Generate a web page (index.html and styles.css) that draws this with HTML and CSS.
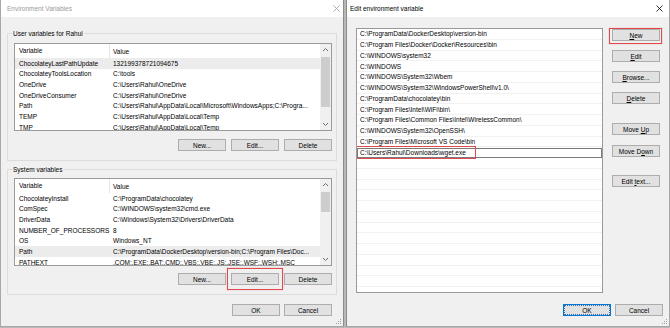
FILE: index.html
```html
<!DOCTYPE html>
<html>
<head>
<meta charset="utf-8">
<link rel="stylesheet" href="styles.css">
</head>
<body>
<div class="dlg dlg-left">
  <div class="titlebar inactive">
    <span>Environment Variables</span>
    <svg class="close" width="7" height="7" viewBox="0 0 7 7"><path d="M0.5 0.5L6.5 6.5M6.5 0.5L0.5 6.5" stroke="currentColor" stroke-width="0.8"/></svg>
  </div>
  <div class="left-body">
    <div class="group g1">
      <span class="glabel">User variables for Rahul</span>
      <div class="lv">
        <div class="lv-main">
          <div class="lv-head"><span class="c1 hd">Variable</span><span class="c2">Value</span></div>
          <div class="lv-row sel"><span class="c1">ChocolateyLastPathUpdate</span><span class="c2">132199378721094675</span></div>
          <div class="lv-row"><span class="c1">ChocolateyToolsLocation</span><span class="c2">C:\tools</span></div>
          <div class="lv-row"><span class="c1">OneDrive</span><span class="c2">C:\Users\Rahul\OneDrive</span></div>
          <div class="lv-row"><span class="c1">OneDriveConsumer</span><span class="c2">C:\Users\Rahul\OneDrive</span></div>
          <div class="lv-row"><span class="c1">Path</span><span class="c2">C:\Users\Rahul\AppData\Local\Microsoft\WindowsApps;C:\Progra...</span></div>
          <div class="lv-row"><span class="c1">TEMP</span><span class="c2">C:\Users\Rahul\AppData\Local\Temp</span></div>
          <div class="lv-row"><span class="c1">TMP</span><span class="c2">C:\Users\Rahul\AppData\Local\Temp</span></div>
        </div>
        <div class="sb">
          <svg class="arr" width="11" height="12" viewBox="0 0 11 12"><path d="M3 7L5.5 4.5L8 7" fill="none" stroke="#606060" stroke-width="0.9"/></svg>
          <div class="sb-track"><div class="thumb t1"></div></div>
          <svg class="arr" width="11" height="12" viewBox="0 0 11 12"><path d="M3 5L5.5 7.5L8 5" fill="none" stroke="#606060" stroke-width="0.9"/></svg>
        </div>
      </div>
      <div class="btnrow">
        <div class="btn"><span>New...</span></div>
        <div class="btn"><span>Edit...</span></div>
        <div class="btn"><span>Delete</span></div>
      </div>
    </div>
    <div class="group g2">
      <span class="glabel">System variables</span>
      <div class="lv">
        <div class="lv-main">
          <div class="lv-head"><span class="c1 hd">Variable</span><span class="c2">Value</span></div>
          <div class="lv-row"><span class="c1">ChocolateyInstall</span><span class="c2">C:\ProgramData\chocolatey</span></div>
          <div class="lv-row"><span class="c1">ComSpec</span><span class="c2">C:\WINDOWS\system32\cmd.exe</span></div>
          <div class="lv-row"><span class="c1">DriverData</span><span class="c2">C:\Windows\System32\Drivers\DriverData</span></div>
          <div class="lv-row"><span class="c1">NUMBER_OF_PROCESSORS</span><span class="c2">8</span></div>
          <div class="lv-row"><span class="c1">OS</span><span class="c2">Windows_NT</span></div>
          <div class="lv-row sel"><span class="c1">Path</span><span class="c2">C:\ProgramData\DockerDesktop\version-bin;C:\Program Files\Doc...</span></div>
          <div class="lv-row"><span class="c1">PATHEXT</span><span class="c2">.COM;.EXE;.BAT;.CMD;.VBS;.VBE;.JS;.JSE;.WSF;.WSH;.MSC</span></div>
        </div>
        <div class="sb">
          <svg class="arr" width="11" height="12" viewBox="0 0 11 12"><path d="M3 7L5.5 4.5L8 7" fill="none" stroke="#606060" stroke-width="0.9"/></svg>
          <div class="sb-track"><div class="thumb t2"></div></div>
          <svg class="arr" width="11" height="12" viewBox="0 0 11 12"><path d="M3 5L5.5 7.5L8 5" fill="none" stroke="#606060" stroke-width="0.9"/></svg>
        </div>
      </div>
      <div class="btnrow">
        <div class="btn"><span>New...</span></div>
        <div class="btn hl"><span>Edit...</span></div>
        <div class="btn"><span>Delete</span></div>
      </div>
    </div>
    <div class="footer footer-left">
      <div class="btn"><span>OK</span></div>
      <div class="btn"><span>Cancel</span></div>
    </div>
  </div>
  <svg class="grip" width="5" height="5" viewBox="0 0 5 5"><g fill="#a0a0a0"><rect x="4" y="0" width="1" height="1"/><rect x="2" y="2" width="1" height="1"/><rect x="4" y="2" width="1" height="1"/><rect x="0" y="4" width="1" height="1"/><rect x="2" y="4" width="1" height="1"/><rect x="4" y="4" width="1" height="1"/></g></svg>
</div>
<div class="gap"></div>
<div class="dlg dlg-right">
  <div class="titlebar">
    <span>Edit environment variable</span>
    <svg class="close" width="7" height="7" viewBox="0 0 7 7"><path d="M0.5 0.5L6.5 6.5M6.5 0.5L0.5 6.5" stroke="currentColor" stroke-width="0.8"/></svg>
  </div>
  <div class="right-body">
    <div class="pathlist">
      <div class="prow">C:\ProgramData\DockerDesktop\version-bin</div>
      <div class="prow">C:\Program Files\Docker\Docker\Resources\bin</div>
      <div class="prow">C:\WINDOWS\system32</div>
      <div class="prow">C:\WINDOWS</div>
      <div class="prow">C:\WINDOWS\System32\Wbem</div>
      <div class="prow">C:\WINDOWS\System32\WindowsPowerShell\v1.0\</div>
      <div class="prow">C:\ProgramData\chocolatey\bin</div>
      <div class="prow">C:\Program Files\Intel\WiFi\bin\</div>
      <div class="prow">C:\Program Files\Common Files\Intel\WirelessCommon\</div>
      <div class="prow">C:\WINDOWS\System32\OpenSSH\</div>
      <div class="prow">C:\Program Files\Microsoft VS Code\bin</div>
      <div class="prow editing"><span class="editbox">C:\Users\Rahul\Downloads\wget.exe</span><span class="redbox"></span></div>
      <div class="prow"></div><div class="prow"></div><div class="prow"></div><div class="prow"></div>
      <div class="prow"></div><div class="prow"></div><div class="prow"></div><div class="prow"></div>
      <div class="prow"></div><div class="prow"></div><div class="prow"></div><div class="prow"></div>
    </div>
    <div class="btncol">
      <div class="btn hl hl-new"><span><u>N</u>ew</span></div>
      <div class="btn b-edit"><span><u>E</u>dit</span></div>
      <div class="btn b-browse"><span><u>B</u>rowse...</span></div>
      <div class="btn b-delete"><span><u>D</u>elete</span></div>
      <div class="btn b-up"><span>Move <u>U</u>p</span></div>
      <div class="btn b-down"><span>Move D<u>o</u>wn</span></div>
      <div class="btn b-text"><span>Edit <u>t</u>ext...</span></div>
    </div>
  </div>
  <div class="footer footer-right">
    <div class="btn focus"><span>OK</span></div>
    <div class="btn"><span>Cancel</span></div>
  </div>
  <svg class="grip" width="5" height="5" viewBox="0 0 5 5"><g fill="#a0a0a0"><rect x="4" y="0" width="1" height="1"/><rect x="2" y="2" width="1" height="1"/><rect x="4" y="2" width="1" height="1"/><rect x="0" y="4" width="1" height="1"/><rect x="2" y="4" width="1" height="1"/><rect x="4" y="4" width="1" height="1"/></g></svg>
</div>
</body>
</html>
```
FILE: styles.css
```css
* { box-sizing: border-box; }
html, body { margin: 0; padding: 0; }
body {
  width: 670px;
  height: 328px;
  overflow: hidden;
  display: flex;
  background: #b8b8b8;
  font-family: "Liberation Sans", Arial, sans-serif;
  font-size: 6.5px;
  color: #000;
}
.dlg {
  position: relative;
  flex: none;
  height: 327px;
  background: #f0f0f0;
  border: 1px solid #a8a8a8;
  border-top: none;
  display: flex;
  flex-direction: column;
}
.dlg-left { width: 344px; border-right-color: #8c8c8c; }
.gap { width: 2px; flex: none; }
.dlg-right { width: 324px; border-left-color: #8c8c8c; }

.titlebar {
  height: 17px;
  flex: none;
  background: #fff;
  display: flex;
  align-items: center;
  justify-content: space-between;
  padding: 0 6px 0 6px;
  color: #000;
}
.titlebar.inactive { color: #9a9a9a; }
.dlg-left .titlebar { padding-right: 3px; }
.dlg-right .titlebar { padding-left: 3px; padding-right: 6px; }
.close { display: block; }

.left-body { padding: 0 6px; display: flex; flex-direction: column; }
.group {
  position: relative;
  border: 1px solid #dcdcdc;
  padding: 9px 4px 9px 6px;
}
.g1 { margin-top: 16px; }
.g2 { margin-top: 8px; padding-top: 8px; }
.glabel {
  position: absolute;
  top: -4px;
  left: 4px;
  padding: 0 1px;
  background: #f0f0f0;
  line-height: 7px;
}

.lv {
  height: 88px;
  border: 1px solid #9a9a9a;
  background: #fff;
  display: flex;
  overflow: hidden;
}
.lv-main { flex: 1; min-width: 0; }
.lv-head { height: 14px; display: flex; align-items: center; }
.lv-head .hd { height: 14px; line-height: 14px; border-right: 1px solid #e5e5e5; }
.lv-row {
  height: 10.65px;
  display: flex;
  align-items: center;
  white-space: nowrap;
}
.lv-row.sel { background: #ececec; }
.c1 { width: 95px; flex: none; padding-left: 4px; white-space: nowrap; }
.c2 { padding-left: 3px; white-space: nowrap; }

.sb {
  width: 11px;
  flex: none;
  background: #f0f0f0;
  display: flex;
  flex-direction: column;
}
.arr { display: block; flex: none; }
.sb-track { flex: 1; padding: 1px 1px 0 1px; }
.thumb { background: #cdcdcd; }
.t1 { height: 50px; }
.t2 { height: 20px; }

.btnrow {
  display: flex;
  justify-content: flex-end;
  gap: 5px;
  margin-top: 8px;
}
.g2 .btnrow { margin-top: 7px; }
.btn {
  position: relative;
  width: 48px;
  height: 12px;
  flex: none;
  border: 1px solid #adadad;
  background: #e1e1e1;
  display: flex;
  align-items: center;
  justify-content: center;
  white-space: nowrap;
}
.btn.hl::after {
  content: "";
  position: absolute;
  left: -5px;
  right: -5px;
  top: -6px;
  bottom: -6px;
  border: 1.5px solid #e04a4e;
  box-shadow: 0 0 1px rgba(224, 74, 78, 0.5);
}

.footer { display: flex; justify-content: flex-end; gap: 4px; }
.footer-left { margin-top: 9px; padding-right: 5px; }
.footer-right { margin-top: 11px; padding-right: 6px; }
.btn.focus {
  border: 1px solid #0078d7;
  outline: 1px dotted #3a6ea5;
  outline-offset: -2px;
}

.right-body {
  display: flex;
  padding: 11px 0 0 9px;
}
.pathlist {
  width: 247px;
  height: 265px;
  flex: none;
  border: 1px solid #9a9a9a;
  background: #fff;
  overflow: hidden;
}
.prow {
  position: relative;
  height: 10.75px;
  border-bottom: 1px solid #f2f2f2;
  padding-left: 3px;
  display: flex;
  align-items: center;
  white-space: nowrap;
}
.prow.editing { padding-left: 0; border-bottom: none; }
.editbox {
  flex: 1;
  height: 10px;
  border: 1px solid #7a7a7a;
  padding-left: 2px;
  display: flex;
  align-items: center;
}
.redbox {
  position: absolute;
  left: -1px;
  top: -1px;
  width: 120px;
  height: 13px;
  border: 1.5px solid #e04a4e;
}

.btncol {
  margin-left: 9px;
  display: flex;
  flex-direction: column;
}
.hl-new { margin-top: 1px; }
.hl-new.hl::after { left: -4px; right: -3px; top: -2px; bottom: -4px; }
.b-edit { margin-top: 9px; }
.b-browse { margin-top: 9px; }
.b-delete { margin-top: 9px; }
.b-up { margin-top: 19px; }
.b-down { margin-top: 10px; }
.b-text { margin-top: 18px; }

.grip { position: absolute; right: 2px; bottom: 2px; }
```
